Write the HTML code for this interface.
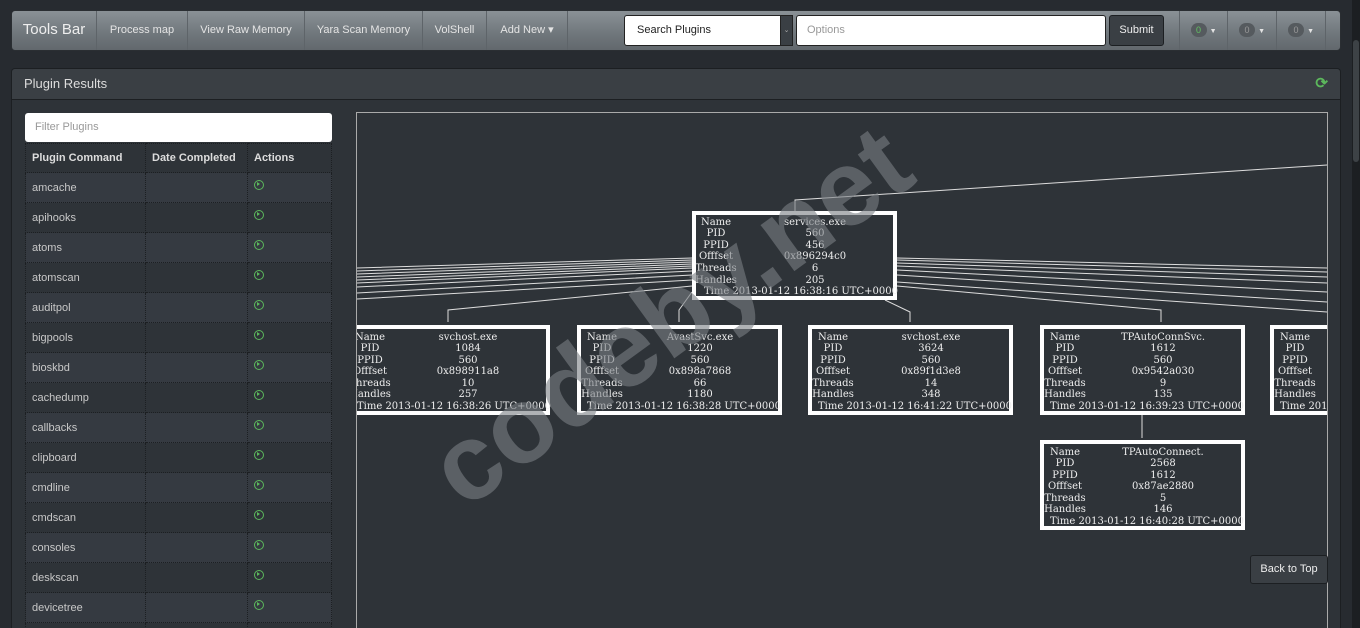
<!DOCTYPE html>
<html style="overflow:hidden;width:1360px;height:628px"><head><meta charset="utf-8"><style>
*{box-sizing:border-box;margin:0;padding:0}
body{width:1360px;height:628px;overflow:hidden;background:#272b30;font-family:"Liberation Sans",sans-serif;position:relative;color:#c8c8c8}
.nav{position:absolute;left:11px;top:10px;width:1330px;height:41px;background:linear-gradient(#8a9196,#6f767b 60%,#62686d);border-radius:4px;border:1px solid #2a2e32}
.nav .it{position:absolute;top:0;height:39px;line-height:38px;font-size:11px;color:#e4e4e4;border-right:1px solid #5e6469;text-align:center}
.nav .brand{font-size:15px;color:#eee}
.sb{position:absolute;right:0;top:0;width:8px;height:628px;background:#1c1f22}
.sb i{position:absolute;left:1px;top:40px;width:6px;height:122px;background:#3d4246;border-radius:3px}
.panel{position:absolute;left:11px;top:68px;width:1330px;height:560px;background:#2e3338;border:1px solid #1c1f22;border-bottom:none;border-radius:4px 4px 0 0;overflow:hidden}
.ph{height:31px;background:#3a3f44;border-bottom:1px solid #1c1f22;font-size:13px;color:#ddd;padding:7px 12px}
.filter{position:absolute;left:13px;top:44px;width:307px;height:29px;background:#fff;border-radius:3px;font-size:11px;color:#999;padding:8px 10px}
table{position:absolute;left:13px;top:74px;width:307px;border-collapse:collapse;font-size:11px}
td,th{border:1px dotted #1c1f22;height:30px;padding:0 6px;text-align:left;color:#c8c8c8;font-weight:normal}
th{font-weight:bold;color:#ddd;height:29px}
tr:nth-child(even) td{background:#353a41}
tr:nth-child(odd) td{background:#2e3338}
.pl{display:inline-block;width:10px;height:10px;border:1.6px solid #5cb85c;border-radius:50%;position:relative;top:-1px}
.pl:after{content:"";position:absolute;left:2.2px;top:1.2px;border-left:3.4px solid #5cb85c;border-top:2.2px solid transparent;border-bottom:2.2px solid transparent}
.badge{display:inline-block;width:16px;height:14px;border-radius:7px;background:#555a5e;font-size:9px;line-height:14px;color:#999;text-align:center}
</style></head><body>
<div class="nav">
<div class="it brand" style="left:0;width:85px">Tools Bar</div>
<div class="it" style="left:85px;width:91px">Process map</div>
<div class="it" style="left:176px;width:117px">View Raw Memory</div>
<div class="it" style="left:293px;width:118px">Yara Scan Memory</div>
<div class="it" style="left:411px;width:64px">VolShell</div>
<div class="it" style="left:475px;width:81px">Add New ▾</div>
<div style="position:absolute;left:612px;top:4px;width:168px;height:31px;background:#fff;border:1px solid #222;border-radius:3px;font-size:11px;color:#222;padding:8px 12px">Search Plugins</div>
<div style="position:absolute;left:768px;top:4px;width:13px;height:31px;background:#3a3f44;border:1px solid #222;font-size:7px;color:#aaa;text-align:center;line-height:29px">⌄</div>
<div style="position:absolute;left:784px;top:4px;width:310px;height:31px;background:#fff;border:1px solid #222;border-radius:3px;font-size:11px;color:#999;padding:8px 10px">Options</div>
<div style="position:absolute;left:1097px;top:4px;width:55px;height:31px;background:#3a3f44;border:1px solid #1c1f22;border-radius:3px;font-size:11px;color:#eee;text-align:center;line-height:29px">Submit</div>
<div class="it" style="left:1167px;width:49px;border-left:1px solid #5e6469"><span class="badge" style="color:#62c462">0</span> <span style="font-size:7px">▼</span></div>
<div class="it" style="left:1216px;width:49px"><span class="badge">0</span> <span style="font-size:7px">▼</span></div>
<div class="it" style="left:1265px;width:49px"><span class="badge">0</span> <span style="font-size:7px">▼</span></div>
</div>
<div class="panel">
<div class="ph">Plugin Results<span style="position:absolute;right:12px;top:5px;color:#5cb85c;font-size:15px;font-weight:bold">⟳</span></div>
<div class="filter">Filter Plugins</div>
<table>
<tr><th style="width:120px">Plugin Command</th><th style="width:102px">Date Completed</th><th>Actions</th></tr>
<tr><td>amcache</td><td></td><td><span class="pl"></span></td></tr>
<tr><td>apihooks</td><td></td><td><span class="pl"></span></td></tr>
<tr><td>atoms</td><td></td><td><span class="pl"></span></td></tr>
<tr><td>atomscan</td><td></td><td><span class="pl"></span></td></tr>
<tr><td>auditpol</td><td></td><td><span class="pl"></span></td></tr>
<tr><td>bigpools</td><td></td><td><span class="pl"></span></td></tr>
<tr><td>bioskbd</td><td></td><td><span class="pl"></span></td></tr>
<tr><td>cachedump</td><td></td><td><span class="pl"></span></td></tr>
<tr><td>callbacks</td><td></td><td><span class="pl"></span></td></tr>
<tr><td>clipboard</td><td></td><td><span class="pl"></span></td></tr>
<tr><td>cmdline</td><td></td><td><span class="pl"></span></td></tr>
<tr><td>cmdscan</td><td></td><td><span class="pl"></span></td></tr>
<tr><td>consoles</td><td></td><td><span class="pl"></span></td></tr>
<tr><td>deskscan</td><td></td><td><span class="pl"></span></td></tr>
<tr><td>devicetree</td><td></td><td><span class="pl"></span></td></tr>
<tr><td>&nbsp;</td><td></td><td></td></tr>
</table>
</div>
<svg style="position:absolute;left:0;top:0" width="1360" height="628" font-family="DejaVu Serif, Liberation Serif, serif" font-size="10" fill="#eee">
<rect x="356.5" y="112.5" width="971" height="530" fill="#2e3338" stroke="#aaa" stroke-width="1"/>
<g stroke="#ddd" stroke-width="1" fill="none">
<path d="M795 211V200L1327 165"/>
<path d="M692 258L357 268M692 260L357 271M692 262L357 274M692 264L357 277M692 266L357 280M692 268L357 283M692 271L357 287M692 275L357 293M692 280L357 299M692 286L448 310V322M692 292L679 310V322"/>
<path d="M897 258L1327 268M897 260L1327 272M897 263L1327 277M897 266L1327 283M897 270L1327 292M897 275L1327 302M897 282L1327 312M897 286L1161 310V322M885 300L910 312V322"/>
<path d="M1142 415V438"/>
</g>
<g>
<rect x="694" y="213" width="201" height="85" fill="#2e3338" stroke="#fff" stroke-width="4"/>
<g text-anchor="middle"><text x="716" y="225">Name</text><text x="716" y="236">PID</text><text x="716" y="248">PPID</text><text x="716" y="259">Offfset</text><text x="716" y="271">Threads</text><text x="716" y="283">Handles</text>
<text x="815" y="225">services.exe</text><text x="815" y="236">560</text><text x="815" y="248">456</text><text x="815" y="259">0x896294c0</text><text x="815" y="271">6</text><text x="815" y="283">205</text></g>
<text x="704" y="294">Time  2013-01-12 16:38:16 UTC+0000</text>
</g>
<clipPath id="c"><rect x="357" y="113" width="970" height="520"/></clipPath>
<g clip-path="url(#c)">
<g>
<rect x="352" y="327" width="196" height="86" fill="#2e3338" stroke="#fff" stroke-width="4"/>
<g text-anchor="middle"><text x="370" y="340">Name</text><text x="370" y="351">PID</text><text x="370" y="363">PPID</text><text x="370" y="374">Offfset</text><text x="370" y="386">Threads</text><text x="370" y="397">Handles</text>
<text x="468" y="340">svchost.exe</text><text x="468" y="351">1084</text><text x="468" y="363">560</text><text x="468" y="374">0x898911a8</text><text x="468" y="386">10</text><text x="468" y="397">257</text></g>
<text x="357" y="409">Time  2013-01-12 16:38:26 UTC+0000</text>
</g>
<g>
<rect x="579" y="327" width="201" height="86" fill="#2e3338" stroke="#fff" stroke-width="4"/>
<g text-anchor="middle"><text x="602" y="340">Name</text><text x="602" y="351">PID</text><text x="602" y="363">PPID</text><text x="602" y="374">Offfset</text><text x="602" y="386">Threads</text><text x="602" y="397">Handles</text>
<text x="700" y="340">AvastSvc.exe</text><text x="700" y="351">1220</text><text x="700" y="363">560</text><text x="700" y="374">0x898a7868</text><text x="700" y="386">66</text><text x="700" y="397">1180</text></g>
<text x="587" y="409">Time  2013-01-12 16:38:28 UTC+0000</text>
</g>
<g transform="translate(231,0)">
<rect x="579" y="327" width="201" height="86" fill="#2e3338" stroke="#fff" stroke-width="4"/>
<g text-anchor="middle"><text x="602" y="340">Name</text><text x="602" y="351">PID</text><text x="602" y="363">PPID</text><text x="602" y="374">Offfset</text><text x="602" y="386">Threads</text><text x="602" y="397">Handles</text>
<text x="700" y="340">svchost.exe</text><text x="700" y="351">3624</text><text x="700" y="363">560</text><text x="700" y="374">0x89f1d3e8</text><text x="700" y="386">14</text><text x="700" y="397">348</text></g>
<text x="587" y="409">Time  2013-01-12 16:41:22 UTC+0000</text>
</g>
<g transform="translate(463,0)">
<rect x="579" y="327" width="201" height="86" fill="#2e3338" stroke="#fff" stroke-width="4"/>
<g text-anchor="middle"><text x="602" y="340">Name</text><text x="602" y="351">PID</text><text x="602" y="363">PPID</text><text x="602" y="374">Offfset</text><text x="602" y="386">Threads</text><text x="602" y="397">Handles</text>
<text x="700" y="340">TPAutoConnSvc.</text><text x="700" y="351">1612</text><text x="700" y="363">560</text><text x="700" y="374">0x9542a030</text><text x="700" y="386">9</text><text x="700" y="397">135</text></g>
<text x="587" y="409">Time  2013-01-12 16:39:23 UTC+0000</text>
</g>
<g transform="translate(463,115)">
<rect x="579" y="327" width="201" height="86" fill="#2e3338" stroke="#fff" stroke-width="4"/>
<g text-anchor="middle"><text x="602" y="340">Name</text><text x="602" y="351">PID</text><text x="602" y="363">PPID</text><text x="602" y="374">Offfset</text><text x="602" y="386">Threads</text><text x="602" y="397">Handles</text>
<text x="700" y="340">TPAutoConnect.</text><text x="700" y="351">2568</text><text x="700" y="363">1612</text><text x="700" y="374">0x87ae2880</text><text x="700" y="386">5</text><text x="700" y="397">146</text></g>
<text x="587" y="409">Time  2013-01-12 16:40:28 UTC+0000</text>
</g>
<g transform="translate(693,0)">
<rect x="579" y="327" width="201" height="86" fill="#2e3338" stroke="#fff" stroke-width="4"/>
<g text-anchor="middle"><text x="602" y="340">Name</text><text x="602" y="351">PID</text><text x="602" y="363">PPID</text><text x="602" y="374">Offfset</text><text x="602" y="386">Threads</text><text x="602" y="397">Handles</text></g>
<text x="587" y="409">Time  2013-01-12 16:42:00 UTC+0000</text>
</g>
</g>
<text x="672" y="352" transform="rotate(-36 672 318)" text-anchor="middle" font-family="Liberation Sans,sans-serif" font-weight="bold" font-size="108" fill="#7a7f84" fill-opacity="0.6">codeby.net</text>
</svg>
<div style="position:absolute;left:1250px;top:555px;width:78px;height:29px;background:#3a3f44;border:1px solid #1c1f22;border-radius:3px;font-size:11px;color:#eee;text-align:center;line-height:27px">Back to Top</div>
<div class="sb"><i></i></div>
</body></html>
